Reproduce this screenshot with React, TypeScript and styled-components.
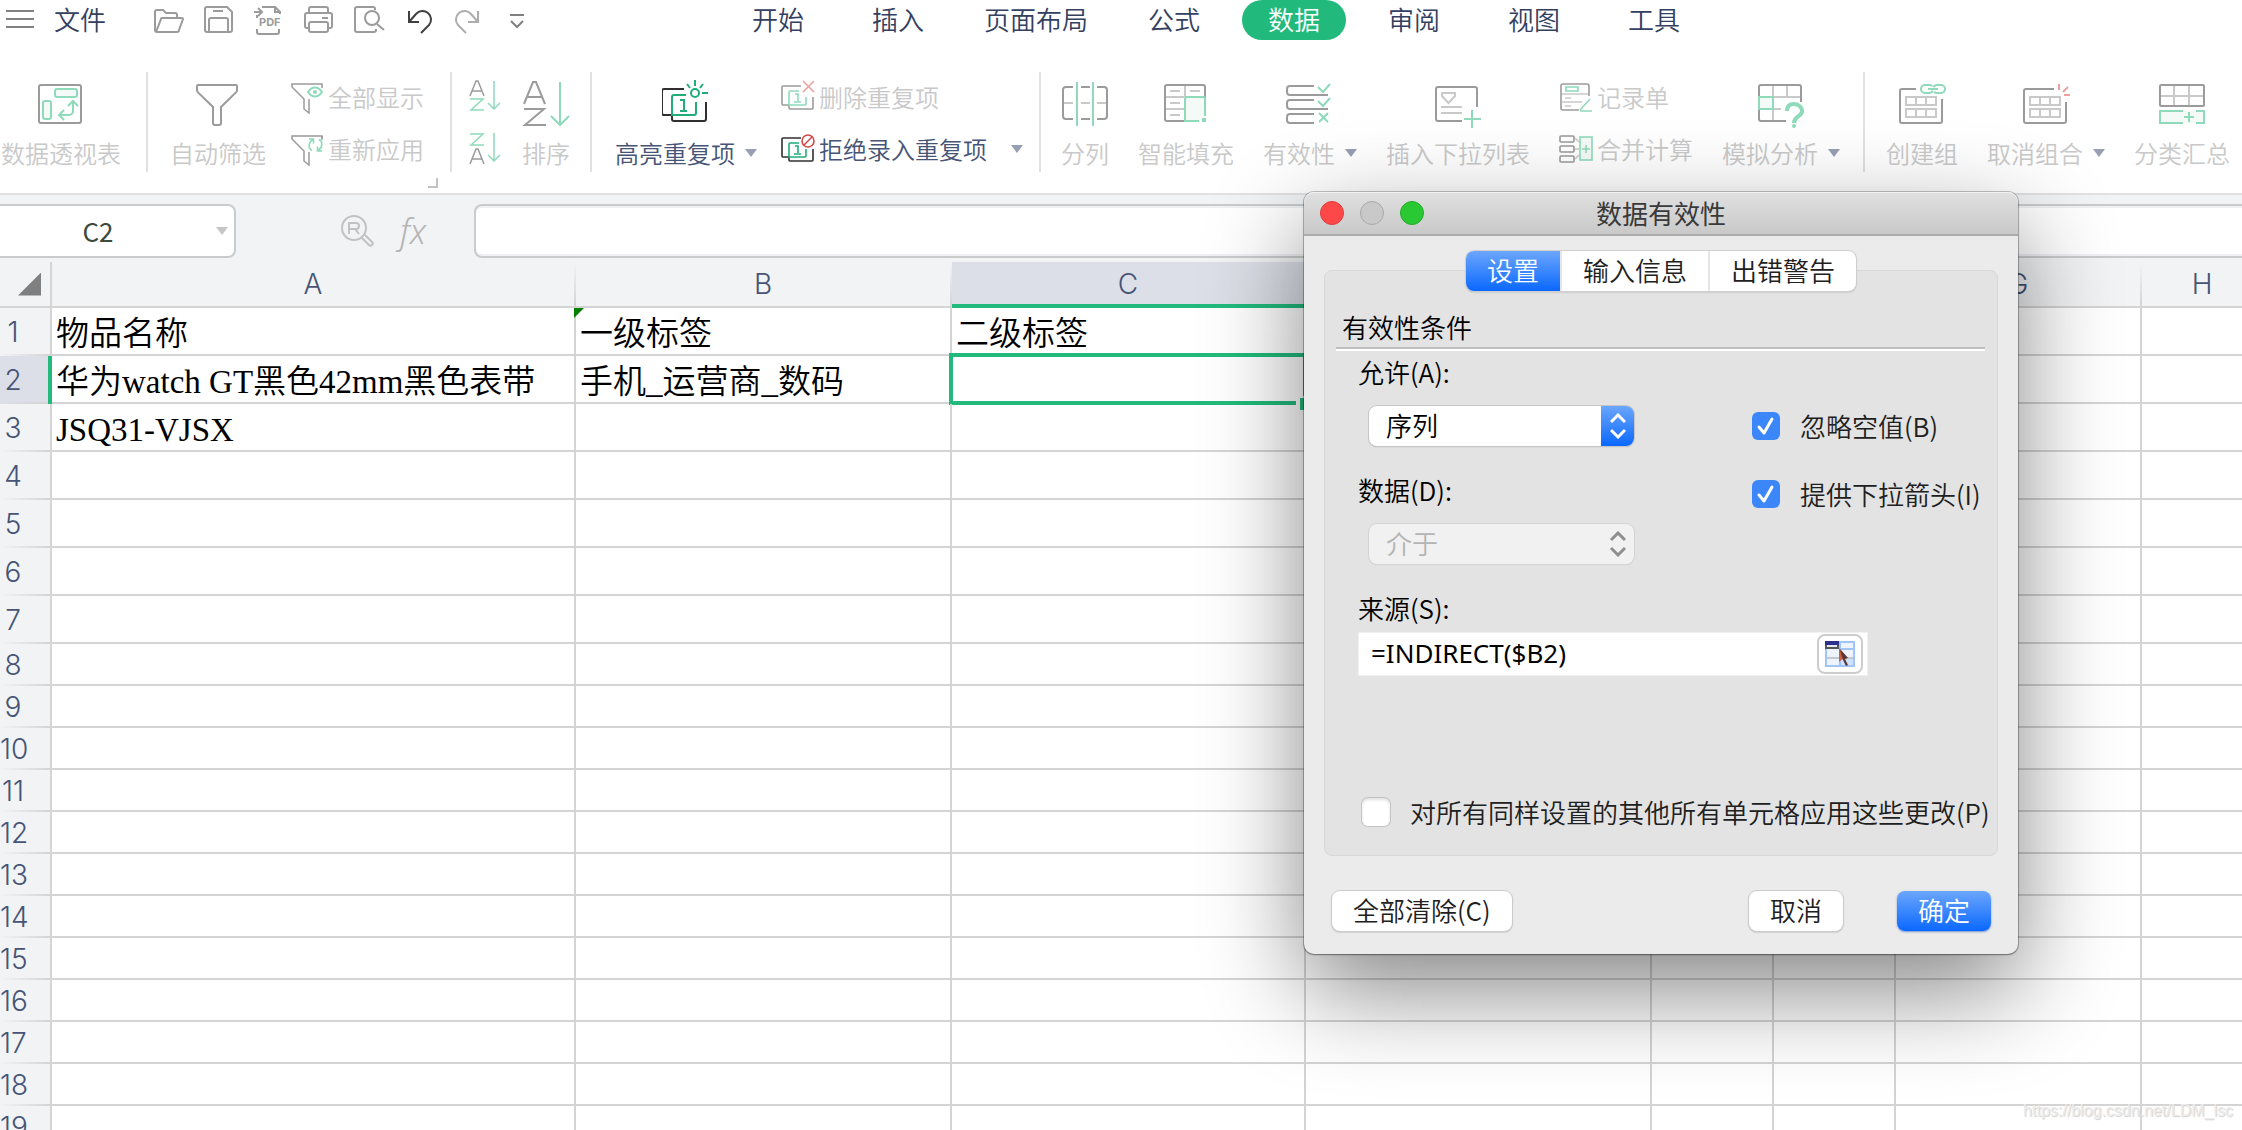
import React from "react";
import styled, { createGlobalStyle, css } from "styled-components";

const color = {
  line: "#d4d4d4",
  rule: "#e1e1e1",
  chrome: "#f1f3f5",
  active: "#dcdfe7",
  green: "#21ba7c",
  navy: "#33405f",
  label: "#465475",
  muted: "#c9c9c9",
  iconGray: "#9b9b9b",
  iconLight: "#c9c9c9",
  iconGreen: "#8fdabb",
  iconTint: "#f3faf7",
};

const sans = `"Noto Sans CJK SC", "Noto Sans", sans-serif`;
const latin = `Inter, "Liberation Sans", sans-serif`;
const serif = `"Liberation Serif", "Noto Sans CJK SC", serif`;

const GlobalStyle = createGlobalStyle`
  *, *::before, *::after { box-sizing: border-box; }
  body { margin: 0; overflow: hidden; background: #fff; font-family: ${sans}; }
  button, input, select { font: inherit; color: inherit; margin: 0; }
`;

const Workspace = styled.div`
  position: relative;
  display: flex;
  flex-direction: column;
  height: 100vh;
  overflow: hidden;
`;

/* ---------- menu bar ---------- */

const MenuBar = styled.header`
  display: flex;
  align-items: center;
  flex-shrink: 0;
  height: 40px;
  padding-left: 4px;
`;

const PlainButton = styled.button`
  display: flex;
  align-items: center;
  flex-shrink: 0;
  padding: 0;
  border: 0;
  background: none;
  white-space: nowrap;
`;

const FileButton = styled(PlainButton)`
  margin-left: 18px;
  color: ${color.navy};
  font-size: 26px;
  font-weight: 350;
  line-height: 38px;
  padding-bottom: 2px;
`;

const QuickTools = styled.div`
  display: flex;
  gap: 18px;
  margin-left: 47px;
`;

const Tabs = styled.nav`
  display: flex;
  gap: 16px;
  margin-left: 191px;
`;

const Tab = styled.button<{ $active?: boolean }>`
  flex-shrink: 0;
  min-width: 104px;
  height: 40px;
  padding: 0 18px 2px;
  border: 0;
  border-radius: 20px;
  background: ${(p) => (p.$active ? color.green : "transparent")};
  color: ${(p) => (p.$active ? "#fff" : color.navy)};
  font-size: 26px;
  font-weight: 350;
  line-height: 38px;
  white-space: nowrap;
`;

/* ---------- ribbon ---------- */

const Ribbon = styled.section`
  display: flex;
  flex-shrink: 0;
  padding: 32px 0 21px;
  border-bottom: 2px solid ${color.rule};
`;

const Group = styled.div<{ $gap?: number; $left?: number; $right?: number }>`
  position: relative;
  display: flex;
  flex-shrink: 0;
  gap: ${(p) => p.$gap ?? 24}px;
  height: 100px;
  padding: 8px ${(p) => p.$right ?? 24}px 0 ${(p) => p.$left ?? 24}px;
  & + & {
    border-left: 2px solid ${color.rule};
  }
`;

const BigButton = styled.button<{ $enabled?: boolean }>`
  display: flex;
  flex-direction: column;
  align-items: center;
  flex-shrink: 0;
  gap: 10px;
  height: 90px;
  padding: 0;
  border: 0;
  background: none;
  color: ${(p) => (p.$enabled ? color.label : color.muted)};
  font-size: 24px;
  font-weight: 350;
  line-height: 30px;
  white-space: nowrap;
`;

const Caption = styled.span`
  display: flex;
  align-items: center;
  gap: 10px;
`;

const Stack = styled.div`
  display: flex;
  flex-direction: column;
  flex-shrink: 0;
  gap: 18px;
`;

const SmallButton = styled.button<{ $enabled?: boolean }>`
  display: flex;
  align-items: center;
  gap: 4px;
  height: 34px;
  padding: 0;
  border: 0;
  background: none;
  color: ${(p) => (p.$enabled ? color.label : color.muted)};
  font-size: 24px;
  font-weight: 350;
  line-height: 32px;
  white-space: nowrap;
`;

const Caret = styled.span<{ $pale?: boolean; $apart?: boolean }>`
  width: 12px;
  height: 8px;
  margin-left: ${(p) => (p.$apart ? 20 : 0)}px;
  background: ${(p) => (p.$pale ? "#c6c6c6" : "#979fb3")};
  clip-path: polygon(0 0, 100% 0, 50% 100%);
`;

const Launcher = styled.span`
  position: absolute;
  right: 12px;
  bottom: -16px;
  width: 10px;
  height: 10px;
  border: solid #c2c2c2;
  border-width: 0 2px 2px 0;
`;

/* ---------- formula bar ---------- */

const FormulaBar = styled.section`
  display: flex;
  align-items: center;
  flex-shrink: 0;
  height: 67px;
  padding: 9px 0 4px;
  background: ${color.chrome};
`;

const NameBox = styled.div`
  display: flex;
  align-items: center;
  width: 236px;
  height: 54px;
  padding-right: 6px;
  border: 2px solid #c9cbcd;
  border-left: 0;
  border-radius: 0 8px 8px 0;
  background: #fff;
`;

const NameInput = styled.input`
  flex: 1;
  min-width: 0;
  padding: 0 20px 2px 0;
  border: 0;
  outline: 0;
  background: none;
  color: #3b4a3b;
  font-size: 26px;
  text-align: center;
`;

const FormulaTools = styled.div`
  display: flex;
  gap: 26px;
  margin: 0 40px 0 104px;
`;

const FxButton = styled(PlainButton)`
  width: 34px;
  height: 34px;
  color: #b5b5b5;
  font-family: "Noto Sans", sans-serif;
  font-size: 34px;
  font-style: italic;
  font-weight: 300;
  line-height: 34px;
`;

const FormulaInput = styled.input`
  flex: 1;
  height: 54px;
  padding: 0 16px;
  border: 2px solid #c9cbcd;
  border-right: 0;
  border-radius: 8px 0 0 8px;
  outline: 0;
  background: #fff;
  box-shadow: inset 0 2px 0 #f0f1f5, inset 0 -2px 0 #f0f1f5;
  font-size: 26px;
`;

/* ---------- sheet ---------- */

const SheetArea = styled.main`
  flex: 1;
  min-height: 0;
  overflow: hidden;
`;

const Sheet = styled.table`
  width: 100%;
  table-layout: fixed;
  border-collapse: separate;
  border-spacing: 0;
`;

const Corner = styled.th`
  height: 46px;
  padding: 0;
  border: solid ${color.line};
  border-width: 0 2px 2px 0;
  background: ${color.chrome};
  &::after {
    content: "";
    display: block;
    width: 23px;
    height: 23px;
    margin-left: 18px;
    background: #7f7f7f;
    clip-path: polygon(100% 0, 100% 100%, 0 100%);
  }
`;

const ColumnHead = styled.th<{ $active?: boolean }>`
  height: 46px;
  padding: ${(p) => (p.$active ? 2 : 0)}px 2px 0 0;
  border-bottom: ${(p) => (p.$active ? `4px solid ${color.green}` : `2px solid ${color.line}`)};
  background: linear-gradient(transparent, ${color.line}) right / 2px 100% no-repeat,
    ${(p) => (p.$active ? color.active : color.chrome)};
  color: ${color.label};
  font-family: ${latin};
  font-size: 28px;
  font-weight: 300;
  line-height: 36px;
`;

const RowHead = styled.th<{ $active?: boolean }>`
  padding: 0 24px 0 0;
  border-right: ${(p) => (p.$active ? `4px solid ${color.green}` : `2px solid ${color.line}`)};
  background: linear-gradient(90deg, transparent, ${color.line}) bottom / 100% 2px no-repeat,
    ${(p) => (p.$active ? color.active : color.chrome)};
  color: ${color.label};
  font-family: ${latin};
  font-size: 28px;
  font-weight: 300;
  line-height: 36px;
  text-align: center;
  ${(p) => p.$active && css`padding-right: 22px;`}
`;

const Row = styled.tr<{ $tall: boolean }>`
  height: ${(p) => (p.$tall ? 48 : 42)}px;
`;

const Cell = styled.td`
  position: relative;
  padding: 6px 0 0 4px;
  border: solid ${color.line};
  border-width: 0 2px 2px 0;
  color: #000;
  font-family: ${serif};
  font-size: 33px;
  font-weight: 350;
  line-height: 38px;
  white-space: nowrap;
`;

const TextFlag = styled.span`
  position: absolute;
  top: 0;
  left: -2px;
  width: 10px;
  height: 10px;
  background: #008000;
  clip-path: polygon(0 0, 100% 0, 0 100%);
`;

const Selection = styled.span`
  position: absolute;
  inset: -3px -3px -3px -3px;
  border: 4px solid ${color.green};
  &::after {
    content: "";
    position: absolute;
    right: -9px;
    bottom: -9px;
    width: 16px;
    height: 14px;
    border: solid #fff;
    border-width: 2px 0 0 4px;
    background: ${color.green};
  }
`;

/* ---------- dialog ---------- */

const Dialog = styled.section`
  position: absolute;
  top: 192px;
  left: 1304px;
  width: 714px;
  border-radius: 10px;
  background: #ebebeb;
  box-shadow: 0 0 0 1px rgba(0, 0, 0, 0.22), 0 1px 2px rgba(0, 0, 0, 0.3),
    0 36px 98px rgba(0, 0, 0, 0.48);
  color: #202020;
  font-size: 26px;
  font-weight: 350;
  line-height: 30px;
`;

const TitleBar = styled.header`
  display: grid;
  grid-template-columns: 1fr auto 1fr;
  align-items: center;
  height: 44px;
  padding: 0 16px;
  border-bottom: 2px solid #ababab;
  border-radius: 10px 10px 0 0;
  background: linear-gradient(#e0e0e0, #c9c9c9);
  box-shadow: inset 0 1px 0 #f2f2f2;
`;

const Lights = styled.div`
  display: flex;
  gap: 16px;
`;

const Light = styled.button<{ $fill: string; $edge: string }>`
  width: 24px;
  height: 24px;
  padding: 0;
  border: 1px solid ${(p) => p.$edge};
  border-radius: 50%;
  background: ${(p) => p.$fill};
`;

const Title = styled.h1`
  margin: 0;
  color: #3a3a3a;
  font-size: 26px;
  font-weight: 400;
  line-height: 30px;
`;

const DialogTabs = styled.div`
  position: relative;
  display: flex;
  width: max-content;
  height: 40px;
  margin: 15px auto -21px;
  border-radius: 8px;
  background: #fff;
  box-shadow: 0 0 0 1px #cfcfcf, 0 1px 2px rgba(0, 0, 0, 0.3);
`;

const blueFace = css`
  background: linear-gradient(#6ba6fb, #3b87fd 50%, #0a68ff);
  color: #fff;
`;

const DialogTab = styled.button<{ $active?: boolean }>`
  padding: 0 21px 2px;
  border: 0;
  background: none;
  ${(p) =>
    p.$active
      ? css`
          ${blueFace}
          border-radius: 8px 0 0 8px;
        `
      : css`
          & + & {
            border-left: 2px solid #e6e6e6;
          }
        `}
`;

const Panel = styled.div`
  margin: 0 20px;
  padding: 41px 12px 28px 11px;
  border: 1px solid #d8d8d8;
  border-radius: 8px;
  background: #e3e3e3;
`;

const SectionTitle = styled.h2`
  margin: 0;
  padding: 0 6px 5px;
  border-bottom: 2px solid #bebebe;
  box-shadow: 0 2px 0 #fff;
  color: #000;
  font-size: 26px;
  font-weight: 350;
  line-height: 30px;
`;

const Conditions = styled.div`
  display: grid;
  grid-template-columns: 1fr 233px;
  padding: 8px 0 0 22px;
`;

const Column = styled.div`
  display: flex;
  flex-direction: column;
`;

const FieldLabel = styled.label`
  margin-bottom: 19px;
  color: #000;
`;

const SelectBox = styled.div<{ $off?: boolean }>`
  position: relative;
  width: 265px;
  height: 40px;
  margin: 0 0 29px 11px;
  border-radius: 8px;
  background: ${(p) => (p.$off ? "#f1f1f1" : "#fff")};
  box-shadow: 0 0 0 1px ${(p) => (p.$off ? "#d3d3d3" : "#c6c6c6")},
    0 1px 1px rgba(0, 0, 0, ${(p) => (p.$off ? 0.1 : 0.3)});
`;

const Select = styled.select`
  width: 100%;
  height: 100%;
  padding: 0 40px 3px 17px;
  border: 0;
  outline: 0;
  appearance: none;
  background: none;
  color: #000;
  opacity: 1;
  &:disabled {
    color: #b4b4b4;
  }
`;

const Stepper = styled.span<{ $off?: boolean }>`
  position: absolute;
  top: 0;
  right: 0;
  display: flex;
  align-items: center;
  justify-content: center;
  width: 33px;
  height: 100%;
  border-radius: 0 8px 8px 0;
  pointer-events: none;
  ${(p) => (p.$off ? css`color: #8e8e8e;` : blueFace)}
`;

const CheckColumn = styled(Column)`
  gap: 38px;
  padding-top: 54px;
`;

const CheckRow = styled.label<{ $inset?: boolean }>`
  display: flex;
  align-items: center;
  gap: 20px;
  height: 30px;
  padding-left: ${(p) => (p.$inset ? 26 : 0)}px;
  white-space: nowrap;
`;

const CheckFace = styled.span`
  position: relative;
  width: 28px;
  height: 28px;
  svg {
    position: absolute;
    inset: 0;
    pointer-events: none;
  }
`;

const CheckInput = styled.input`
  display: block;
  width: 28px;
  height: 28px;
  border-radius: 6px;
  appearance: none;
  background: #fff;
  box-shadow: 0 0 0 1px #c4c4c4, inset 0 2px 3px rgba(0, 0, 0, 0.12);
  &:checked {
    background: #3b87fa;
    box-shadow: none;
  }
`;

const SourceBlock = styled.div`
  display: flex;
  flex-direction: column;
  gap: 9px;
  margin-bottom: 121px;
  padding-left: 22px;
`;

const SourceLabel = styled.label`
  color: #000;
`;

const SourceField = styled.div`
  display: flex;
  align-items: center;
  width: 510px;
  height: 44px;
  padding-right: 4px;
  border: 1px solid #f0f0f0;
  background: #fff;
`;

const SourceInput = styled.input`
  flex: 1;
  min-width: 0;
  padding: 0 12px 2px;
  border: 0;
  outline: 0;
  background: none;
  color: #000;
  font-family: "Noto Sans", ${sans};
  font-size: 26px;
  font-weight: 400;
`;

const PickerButton = styled.button`
  display: flex;
  align-items: center;
  justify-content: center;
  width: 46px;
  height: 40px;
  padding: 0;
  border: 2px solid #cdcdcd;
  border-radius: 8px;
  background: #fff;
`;

const Footer = styled.footer`
  display: flex;
  gap: 54px;
  padding: 35px 27px 23px 28px;
`;

const PushButton = styled.button<{ $primary?: boolean; $first?: boolean }>`
  height: 40px;
  margin-right: ${(p) => (p.$first ? "auto" : "0")};
  padding: 0 21px 2px;
  border: 0;
  border-radius: 8px;
  background: #fff;
  box-shadow: 0 0 0 1px #cbcbcb, 0 1px 2px rgba(0, 0, 0, 0.35);
  ${(p) =>
    p.$primary &&
    css`
      ${blueFace}
      box-shadow: 0 1px 2px rgba(0, 60, 180, 0.5);
    `}
`;

const Watermark = styled.p`
  position: absolute;
  right: 9px;
  bottom: 7px;
  margin: 0;
  color: #ececec;
  font-family: "Liberation Sans", sans-serif;
  font-size: 16px;
  line-height: 24px;
  text-shadow: 1px 1px 1px #cfcfcf;
`;

/* ---------- icons ---------- */

const g = color.iconGray;
const l = color.iconLight;
const e = color.iconGreen;

const Icon = ({ size = 48, children }: { size?: number; children: React.ReactNode }) => (
  <svg width={size} height={size} viewBox={`0 0 ${size} ${size}`} fill="none" stroke={g} strokeWidth={2} aria-hidden="true">
    {children}
  </svg>
);

const PivotIcon = () => (
  <Icon>
    <rect x="2" y="5" width="42" height="38" rx="2" />
    <g stroke={e} fill={color.iconTint}>
      <rect x="18" y="9" width="22" height="8" rx="2" />
      <rect x="6" y="21" width="8" height="18" rx="2" />
    </g>
    <path stroke={e} d="M22 35h10a4 4 0 0 0 4-4V22M31 26l5-5 5 5M27 30l-5 5 5 5" />
  </Icon>
);

const FunnelIcon = () => (
  <Icon>
    <path d="M4 5H42a1 1 0 0 1 1 1v4c0 1-.4 1.800-1 2.400L27 27v16a2 2 0 0 1-2 2h-4a2 2 0 0 1-2-2V27L4 12.400C3.400 11.800 3 11 3 10V6a1 1 0 0 1 1-1z" />
  </Icon>
);

const smallFunnel = <path strokeWidth={1.5} d="M32 8V4H2v3l12 12v10l5 4V19" />;

const ShowAllIcon = () => (
  <Icon size={34}>
    {smallFunnel}
    <path stroke={e} fill="#fff" d="M18 12c4-6 10-6 14 0-4 6-10 6-14 0z" />
    <circle cx="25" cy="12" r="2" fill={e} stroke="none" />
  </Icon>
);

const ReapplyIcon = () => (
  <Icon size={34}>
    {smallFunnel}
    <path fill="#fff" stroke="none" d="M18 6h15v14H18z" />
    <path strokeWidth={1.5} d="M32 8V4" />
    <g stroke={e} strokeWidth={1.600}>
      <path d="M23 7.500c-5 3-5 9-1 11M28 18.500c5-3 5-9 1-11M19 7h4.500v4.500M32 19h-4.500v-4.500" />
    </g>
  </Icon>
);

const SortAscIcon = () => (
  <Icon size={34}>
    <path strokeWidth={1.500} d="M2 16L8 1h2l6 15M4 11h10" />
    <path stroke={e} strokeWidth={1.500} d="M2 19h13L3 30h13M26 1v28M20 23l6 6 6-6" />
  </Icon>
);

const SortDescIcon = () => (
  <Icon size={34}>
    <path strokeWidth={1.500} d="M2 32L8 17h2l6 15M4 27h10" />
    <path stroke={e} strokeWidth={1.500} d="M2 2h13L3 13h13M26 1v28M20 23l6 6 6-6" />
  </Icon>
);

const SortIcon = () => (
  <Icon>
    <path d="M2 24L11 2h3l9 22M5 17h15M2 29h20L3 45h21" />
    <path stroke={e} d="M38 2v42M29 36l9 9 9-9" />
  </Icon>
);

const HighlightIcon = () => (
  <Icon>
    <g transform="translate(-2 0)">
      <path stroke="#303030" d="M24 9H4a2 2 0 0 0-2 2v22a2 2 0 0 0 2 2h8M12 35v4a2 2 0 0 0 2 2h30a2 2 0 0 0 2-2V22" />
      <g stroke="#1fae78">
        <path d="M26 15H14a2 2 0 0 0-2 2v18h22a2 2 0 0 0 2-2V22M20 20h4v11M20 31h7" />
        <circle cx="35" cy="13" r="4" />
        <path d="M35 0v6M27 4l3 4M43 4l-3 4M42 13h6" />
      </g>
    </g>
  </Icon>
);

const DuplicateGlyph = ({ dark, tint }: { dark: string; tint: string }) => (
  <g strokeWidth={1.600}>
    <path stroke={dark} d="M20 6H2a1 1 0 0 0-1 1v17a1 1 0 0 0 1 1h6M8 25v3a1 1 0 0 0 1 1h22a1 1 0 0 0 1-1V17" />
    <path stroke={tint} d="M18 11H9a1 1 0 0 0-1 1v13h16a1 1 0 0 0 1-1v-7M14 14h3v7M13 22h7" />
  </g>
);

const RemoveDupIcon = () => (
  <Icon size={34}>
    <DuplicateGlyph dark={g} tint={e} />
    <path stroke="#eda0a0" strokeWidth={1.600} d="M22 1l11 11M33 1L22 12" />
  </Icon>
);

const RejectDupIcon = () => (
  <Icon size={34}>
    <DuplicateGlyph dark="#303030" tint="#1fae78" />
    <g stroke="#d24a4a" strokeWidth={1.600}>
      <circle cx="27" cy="9" r="6" />
      <path d="M23 13l8-8" />
    </g>
  </Icon>
);

const SplitIcon = () => (
  <Icon>
    <path d="M12 7H5a3 3 0 0 0-3 3v26a3 3 0 0 0 3 3h7M20 7h9M20 39h9M36 7h7a3 3 0 0 1 3 3v26a3 3 0 0 1-3 3h-7" />
    <path stroke={l} d="M3 23h9M20 23h9M36 23h9" />
    <path stroke={e} d="M16 2v44M32 2v44" />
  </Icon>
);

const SmartFillIcon = () => (
  <Icon>
    <rect x="3" y="5" width="40" height="36" rx="2" />
    <path stroke={l} d="M23 6v11M4 17h18M4 29h18M8 11h10M28 11h10M8 23h10M8 35h10" />
    <path stroke="#fff" strokeWidth={4} d="M43 18v24M24 42h20" />
    <path stroke={e} fill={color.iconTint} d="M37 41H23V19a2 2 0 0 1 2-2h16a2 2 0 0 1 2 2v17" />
    <path fill={e} stroke="none" d="M40 38h4v4h-4z" />
  </Icon>
);

const ValidityIcon = () => (
  <Icon>
    <path d="M28 6H4a3 3 0 0 0-3 3v3a3 3 0 0 0 3 3h38M28 20H4a3 3 0 0 0-3 3v3a3 3 0 0 0 3 3h38M28 34H4a3 3 0 0 0-3 3v3a3 3 0 0 0 3 3h24" />
    <path stroke={e} d="M32 7l5 5 7-8M32 21l5 5 7-8M33 33l9 9M42 33l-9 9" />
  </Icon>
);

const InsertListIcon = () => (
  <Icon>
    <path d="M28 41H4a2 2 0 0 1-2-2V9a2 2 0 0 1 2-2h37a2 2 0 0 1 2 2v18" />
    <path stroke={l} d="M8 13h13v3l-6.500 7L8 16zM7 27h21M7 33h21" />
    <path stroke={e} d="M30 39h17M38 30v18" />
  </Icon>
);

const RecordIcon = () => (
  <Icon size={34}>
    <path strokeWidth={1.600} d="M20 30H4a2 2 0 0 1-2-2V6a2 2 0 0 1 2-2h24a2 2 0 0 1 2 2v10" />
    <path stroke={l} strokeWidth={1.600} d="M3 14h26M6 18h6M3 22h20M6 26h6" />
    <path stroke={e} strokeWidth={1.600} d="M7 7h12v4H7zM21 31h12M31 19L21 30" />
  </Icon>
);

const ConsolidateIcon = () => (
  <Icon size={34}>
    <g strokeWidth={1.600}>
      <rect x="1" y="4" width="14" height="6" rx="1" />
      <rect x="1" y="14" width="14" height="6" rx="1" />
      <rect x="1" y="24" width="14" height="6" rx="1" />
      <path stroke={l} d="M16 6l4 4M16 17h4M16 27l4-4" />
      <rect x="21" y="5" width="12" height="23" stroke={e} fill={color.iconTint} />
      <path stroke={e} d="M23 17h8M27 13v8" />
    </g>
  </Icon>
);

const WhatIfIcon = () => (
  <Icon>
    <path stroke={l} d="M16 6v35M30 6v11M3 17h40M16 29h8" />
    <path d="M44 22V7a2 2 0 0 0-2-2H4a2 2 0 0 0-2 2v32a2 2 0 0 0 2 2h25" />
    <rect x="2" y="17" width="14" height="12" stroke={e} fill={color.iconTint} />
    <path stroke={e} strokeWidth={4} d="M30 31c0-5 3-7 7-7s8 3 8 7c0 6-8 5-8 12" />
    <circle cx="37" cy="46" r="2" fill={e} stroke="none" />
  </Icon>
);

const CreateGroupIcon = () => (
  <Icon>
    <path d="M18 9H4a2 2 0 0 0-2 2v30a2 2 0 0 0 2 2h38a2 2 0 0 0 2-2V19" />
    <path stroke={l} d="M8 17h30v8H8zM8 29h30v8H8zM18 17v8M28 17v8M18 29v8M28 29v8" />
    <path stroke={e} d="M34 6c-1-1-2-1-3-1h-4a4 4 0 0 0 0 8h4c2 0 3-1 4-2M36 12c1 1 2 1 3 1h4a4 4 0 0 0 0-8h-4c-2 0-3 1-4 2M30 9h10" />
  </Icon>
);

const UngroupIcon = () => (
  <Icon>
    <path d="M32 9H4a2 2 0 0 0-2 2v30a2 2 0 0 0 2 2h38a2 2 0 0 0 2-2V22" />
    <path stroke={l} d="M8 17h30v8H8zM8 29h30v8H8zM18 17v8M28 17v8M18 29v8M28 29v8" />
    <path stroke="#eda0a0" d="M37 4v6M46 7l-5 5M42 15h6" />
  </Icon>
);

const SubtotalIcon = () => (
  <Icon>
    <path stroke={l} d="M16 6v20M31 6v20M3 16h42" />
    <rect x="2" y="5" width="44" height="21" rx="1" />
    <path stroke="none" fill={color.iconTint} d="M2 31h44v12H2z" />
    <path stroke={e} d="M25 31H2v12h23M38 31h8v12h-8M26 37h10M31 32v10" />
  </Icon>
);

const MenuIcon = () => (
  <Icon size={32}>
    <path stroke="#808080" d="M2 7h28M2 15h28M2 23h28" />
  </Icon>
);
const FolderIcon = () => (
  <Icon size={32}>
    <path d="M2 26V8a2 2 0 0 1 2-2h6l3 3h9a2 2 0 0 1 2 2v3M3 28l5-13a1 1 0 0 1 1-1h20a1 1 0 0 1 1 1l-4 11a2 2 0 0 1-2 2H4a2 2 0 0 1-2-2" />
  </Icon>
);
const SaveIcon = () => (
  <Icon size={32}>
    <path d="M4 3h20l5 5v18a2 2 0 0 1-2 2H4a2 2 0 0 1-2-2V5a2 2 0 0 1 2-2zM6 28V16a2 2 0 0 1 2-2h15a2 2 0 0 1 2 2v12M10 7h10" />
  </Icon>
);
const PdfIcon = () => (
  <Icon size={32}>
    <path d="M9 3h13l5 5v2M4 11v3M4 25v3a2 2 0 0 0 2 2h18a2 2 0 0 0 2-2v-3M1 8h8M5 4l4 4-4 4M22 3v5h5" />
    <text x="6" y="22" fill={g} stroke="none" fontFamily="Inter, sans-serif" fontWeight="700" fontSize="11">
      PDF
    </text>
  </Icon>
);
const PrintIcon = () => (
  <Icon size={32}>
    <path d="M6 9V5a2 2 0 0 1 2-2h15a2 2 0 0 1 2 2v4M6 24H4a2 2 0 0 1-2-2V11a2 2 0 0 1 2-2h23a2 2 0 0 1 2 2v11a2 2 0 0 1-2 2h-2M19 14h6" />
    <rect x="6" y="18" width="19" height="10" rx="2" />
  </Icon>
);
const PreviewIcon = () => (
  <Icon size={32}>
    <path d="M22 6V5a2 2 0 0 0-2-2H4a2 2 0 0 0-2 2v21a2 2 0 0 0 2 2h17a2 2 0 0 0 2-2v-1M24 20l7 6" />
    <circle cx="19" cy="14" r="7" />
  </Icon>
);
const UndoIcon = () => (
  <Icon size={32}>
    <path stroke="#404040" d="M6 7v11h10M6 18l7-8a8.500 8.500 0 0 1 13 11l-8 8" />
  </Icon>
);
const RedoIcon = () => (
  <Icon size={32}>
    <path stroke="#adadad" d="M25 7v11H15M25 18l-7-8A8.500 8.500 0 0 0 5 21l8 8" />
  </Icon>
);
const MoreIcon = () => (
  <Icon size={32}>
    <path stroke="#808080" d="M7 11h14M8 17l6 6 6-6" />
  </Icon>
);

const LookupIcon = () => (
  <Icon size={34}>
    <g stroke="#c2c2c2">
      <circle cx="14" cy="14" r="12" />
      <path d="M9 20V9h7a3 3 0 0 1 0 6H9M15 15l4 5M22 24l7 7a2 2 0 0 0 3-3l-7-7" />
    </g>
  </Icon>
);

const StepperIcon = () => (
  <svg width="16" height="26" viewBox="0 0 16 26" fill="none" stroke="currentColor" strokeWidth="3" aria-hidden="true">
    <path d="M1 9l7-7 7 7M1 17l7 7 7-7" />
  </svg>
);

const TickIcon = () => (
  <svg width="28" height="28" viewBox="0 0 28 28" fill="none" stroke="#fff" strokeWidth="3" strokeLinecap="round" strokeLinejoin="round" aria-hidden="true">
    <path d="M7 15l5 6 8-14" />
  </svg>
);

const PickerIcon = () => (
  <svg width="30" height="26" viewBox="0 0 30 26" aria-hidden="true">
    <path fill="#9fc4f8" d="M0 0h30v26H0z" />
    <path fill="#eef4fe" d="M2 8h12v8H2zM16 2h12v5H16zM16 9h12v7H16zM2 18h12v6H2z" />
    <path fill="#cfe0fb" d="M16 18h12v6H16z" />
    <path fill="#c3c7cf" d="M2 16h26v2H2z" />
    <path fill="#2d2f8f" d="M0 0h14v4H0z" />
    <path fill="#555" d="M0 4h14v4H0z" />
    <path fill="#e6e6ee" d="M2 4h10v2H2z" />
    <path fill="#d2603a" d="M14 7l8 9-3 1-5 4z" />
    <path fill="#5a3a34" d="M15 8l8 9-3 1 3 6-2 1-3-6-1-3z" />
  </svg>
);

/* ---------- data ---------- */

const tabs = ["开始", "插入", "页面布局", "公式", "数据", "审阅", "视图", "工具"];

const columns = [
  { name: "A", width: 524 },
  { name: "B", width: 376 },
  { name: "C", width: 354 },
  { name: "D", width: 346 },
  { name: "E", width: 122 },
  { name: "F", width: 122 },
  { name: "G", width: 246 },
  { name: "H", width: 122 },
];

const values: Record<string, string> = {
  A1: "物品名称",
  B1: "一级标签",
  C1: "二级标签",
  A2: "华为watch GT黑色42mm黑色表带",
  B2: "手机_运营商_数码",
  A3: "JSQ31-VJSX",
};

const rows = Array.from({ length: 19 }, (_, i) => i + 1);

const quickTools = [
  { label: "打开", Glyph: FolderIcon },
  { label: "保存", Glyph: SaveIcon },
  { label: "输出为PDF", Glyph: PdfIcon },
  { label: "打印", Glyph: PrintIcon },
  { label: "打印预览", Glyph: PreviewIcon },
  { label: "撤销", Glyph: UndoIcon },
  { label: "恢复", Glyph: RedoIcon },
  { label: "更多", Glyph: MoreIcon },
];

type ToolProps = { icon: React.ReactNode; label: string; enabled?: boolean; menu?: boolean };

const BigTool = ({ icon, label, enabled, menu }: ToolProps) => (
  <BigButton type="button" $enabled={enabled}>
    {icon}
    <Caption>
      {label}
      {menu && <Caret />}
    </Caption>
  </BigButton>
);

const SmallTool = ({ icon, label, enabled, menu }: ToolProps) => (
  <SmallButton type="button" $enabled={enabled}>
    {icon}
    {label}
    {menu && <Caret $apart />}
  </SmallButton>
);

const CheckBox = ({ label, checked, inset }: { label: string; checked?: boolean; inset?: boolean }) => (
  <CheckRow $inset={inset}>
    <CheckFace>
      <CheckInput type="checkbox" defaultChecked={checked} />
      {checked && <TickIcon />}
    </CheckFace>
    {label}
  </CheckRow>
);

const ValidationDialog = () => (
  <Dialog role="dialog" aria-labelledby="dialog-title">
    <TitleBar>
      <Lights>
        <Light type="button" aria-label="关闭" $fill="#fc4848" $edge="#e03a3a" />
        <Light type="button" aria-label="最小化" $fill="#c9c9c9" $edge="#a9a9a9" />
        <Light type="button" aria-label="缩放" $fill="#2ac833" $edge="#20ad28" />
      </Lights>
      <Title id="dialog-title">数据有效性</Title>
    </TitleBar>
    <DialogTabs>
      <DialogTab type="button" $active>设置</DialogTab>
      <DialogTab type="button">输入信息</DialogTab>
      <DialogTab type="button">出错警告</DialogTab>
    </DialogTabs>
    <Panel>
      <SectionTitle>有效性条件</SectionTitle>
      <Conditions>
        <Column>
          <FieldLabel htmlFor="allow">允许(A):</FieldLabel>
          <SelectBox>
            <Select id="allow" defaultValue="list">
              <option value="list">序列</option>
            </Select>
            <Stepper><StepperIcon /></Stepper>
          </SelectBox>
          <FieldLabel htmlFor="operator">数据(D):</FieldLabel>
          <SelectBox $off>
            <Select id="operator" defaultValue="between" disabled>
              <option value="between">介于</option>
            </Select>
            <Stepper $off><StepperIcon /></Stepper>
          </SelectBox>
        </Column>
        <CheckColumn>
          <CheckBox label="忽略空值(B)" checked />
          <CheckBox label="提供下拉箭头(I)" checked />
        </CheckColumn>
      </Conditions>
      <SourceBlock>
        <SourceLabel htmlFor="source">来源(S):</SourceLabel>
        <SourceField>
          <SourceInput id="source" defaultValue="=INDIRECT($B2)" />
          <PickerButton type="button" aria-label="选择区域"><PickerIcon /></PickerButton>
        </SourceField>
      </SourceBlock>
      <CheckBox inset label="对所有同样设置的其他所有单元格应用这些更改(P)" />
    </Panel>
    <Footer>
      <PushButton type="button" $first>全部清除(C)</PushButton>
      <PushButton type="button">取消</PushButton>
      <PushButton type="button" $primary>确定</PushButton>
    </Footer>
  </Dialog>
);

export default function App() {
  return (
    <Workspace>
      <GlobalStyle />
      <MenuBar>
        <PlainButton type="button" aria-label="菜单"><MenuIcon /></PlainButton>
        <FileButton type="button">文件</FileButton>
        <QuickTools>
          {quickTools.map(({ label, Glyph }) => (
            <PlainButton type="button" key={label} aria-label={label}><Glyph /></PlainButton>
          ))}
        </QuickTools>
        <Tabs>
          {tabs.map((name) => (
            <Tab type="button" key={name} $active={name === "数据"}>{name}</Tab>
          ))}
        </Tabs>
      </MenuBar>

      <Ribbon>
        <Group $left={1} $right={25}>
          <BigTool icon={<PivotIcon />} label="数据透视表" />
        </Group>
        <Group $left={22} $right={26}>
          <BigTool icon={<FunnelIcon />} label="自动筛选" />
          <Stack>
            <SmallTool icon={<ShowAllIcon />} label="全部显示" />
            <SmallTool icon={<ReapplyIcon />} label="重新应用" />
          </Stack>
          <Launcher />
        </Group>
        <Group $gap={20} $left={16} $right={20}>
          <Stack>
            <PlainButton type="button" aria-label="升序"><SortAscIcon /></PlainButton>
            <PlainButton type="button" aria-label="降序"><SortDescIcon /></PlainButton>
          </Stack>
          <BigTool icon={<SortIcon />} label="排序" />
        </Group>
        <Group $left={23} $right={16}>
          <BigTool icon={<HighlightIcon />} label="高亮重复项" enabled menu />
          <Stack>
            <SmallTool icon={<RemoveDupIcon />} label="删除重复项" />
            <SmallTool icon={<RejectDupIcon />} label="拒绝录入重复项" enabled menu />
          </Stack>
        </Group>
        <Group $gap={29} $left={20} $right={23}>
          <BigTool icon={<SplitIcon />} label="分列" />
          <BigTool icon={<SmartFillIcon />} label="智能填充" />
          <BigTool icon={<ValidityIcon />} label="有效性" menu />
          <BigTool icon={<InsertListIcon />} label="插入下拉列表" />
          <Stack>
            <SmallTool icon={<RecordIcon />} label="记录单" />
            <SmallTool icon={<ConsolidateIcon />} label="合并计算" />
          </Stack>
          <BigTool icon={<WhatIfIcon />} label="模拟分析" menu />
        </Group>
        <Group $gap={29} $left={21} $right={10}>
          <BigTool icon={<CreateGroupIcon />} label="创建组" />
          <BigTool icon={<UngroupIcon />} label="取消组合" menu />
          <BigTool icon={<SubtotalIcon />} label="分类汇总" />
        </Group>
      </Ribbon>

      <FormulaBar>
        <NameBox>
          <NameInput aria-label="名称框" defaultValue="C2" />
          <Caret $pale />
        </NameBox>
        <FormulaTools>
          <PlainButton type="button" aria-label="查找"><LookupIcon /></PlainButton>
          <FxButton type="button" aria-label="插入函数">fx</FxButton>
        </FormulaTools>
        <FormulaInput aria-label="编辑栏" />
      </FormulaBar>

      <SheetArea>
        <Sheet>
          <colgroup>
            <col style={{ width: 52 }} />
            {columns.map((c) => (
              <col key={c.name} style={{ width: c.width }} />
            ))}
          </colgroup>
          <thead>
            <tr>
              <Corner aria-label="全选" />
              {columns.map((c) => (
                <ColumnHead key={c.name} scope="col" $active={c.name === "C"}>{c.name}</ColumnHead>
              ))}
            </tr>
          </thead>
          <tbody>
            {rows.map((r) => (
              <Row key={r} $tall={r < 8}>
                <RowHead scope="row" $active={r === 2}>{r}</RowHead>
                {columns.map((c) => {
                  const id = c.name + r;
                  return (
                    <Cell key={id}>
                      {values[id]}
                      {id === "B1" && <TextFlag />}
                      {id === "C2" && <Selection />}
                    </Cell>
                  );
                })}
              </Row>
            ))}
          </tbody>
        </Sheet>
      </SheetArea>

      <ValidationDialog />
      <Watermark>https://blog.csdn.net/LDM_lsc</Watermark>
    </Workspace>
  );
}
